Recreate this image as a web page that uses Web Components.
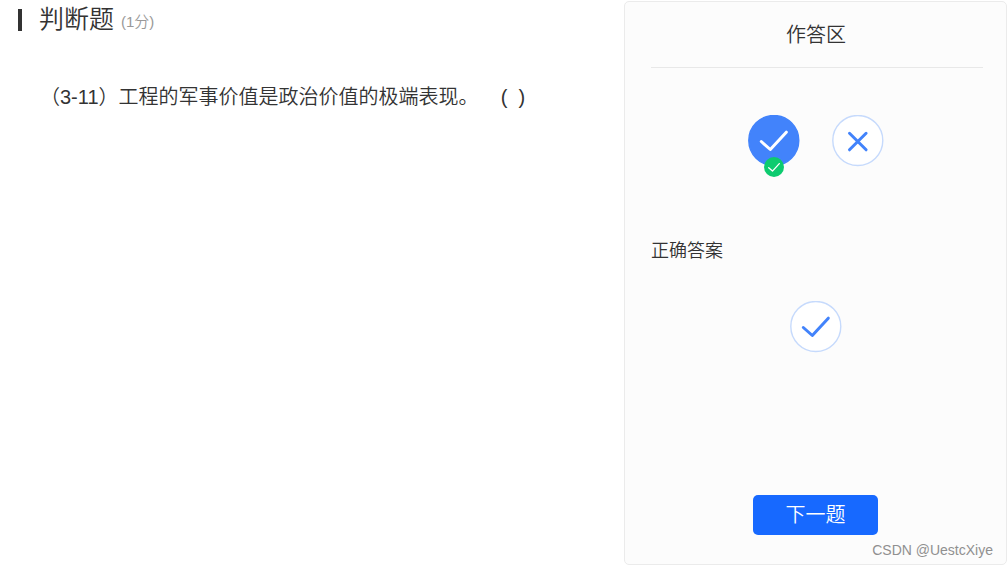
<!DOCTYPE html>
<html lang="zh-CN">
<head>
<meta charset="utf-8">
<meta name="viewport" content="width=device-width, initial-scale=1">
<title>判断题</title>
<style>
html, body { margin: 0; background: #fff; }
body { color: #333; font-family: "Liberation Sans", "Noto Sans CJK SC", sans-serif; font-weight: 350; }
</style>
</head>
<body>
<quiz-page>
  <quiz-question points="(1分)">
    <span slot="kind">判断题</span>
    （3-11）工程的军事价值是政治价值的极端表现。&nbsp;&nbsp;&nbsp;&nbsp;(&nbsp;&nbsp;)
  </quiz-question>
  <answer-panel slot="aside">
    <span slot="title">作答区</span>
    <answer-choices slot="choices"></answer-choices>
    <span slot="label">正确答案</span>
    <mark-icon slot="correct" kind="check" role="img" aria-label="对"></mark-icon>
    <next-button slot="action">下一题</next-button>
    <span slot="watermark">CSDN @UestcXiye</span>
  </answer-panel>
</quiz-page>
<script>
class BaseElement extends HTMLElement {
  constructor() {
    super();
    this.attachShadow({ mode: "open" }).innerHTML = this.template();
  }
}

customElements.define("quiz-page", class extends BaseElement {
  template() {
    return `<style>
      :host { display: grid; grid-template-columns: minmax(0, 1fr) 383px; min-height: 100vh; box-sizing: border-box; padding: 1px 0 2px; }
    </style><slot></slot><slot name="aside"></slot>`;
  }
});

customElements.define("quiz-question", class extends BaseElement {
  template() {
    return `<style>
      :host { display: block; padding: 0 18px; }
      header { display: flex; align-items: center; height: 36px; }
      header::before { content: ""; width: 4px; height: 22px; margin: 2px 17px 0 0; background: #333; }
      h1 { margin: 0; font-size: 25px; line-height: 36px; font-weight: inherit; }
      small { margin: 6px 0 0 7px; font-size: 15px; line-height: 20px; color: #999; }
      p { margin: 44px 0 0; padding-left: 22px; font-size: 20px; line-height: 32px; }
    </style>
    <header><h1><slot name="kind"></slot></h1><small></small></header>
    <p><slot></slot></p>`;
  }
  connectedCallback() {
    this.shadowRoot.querySelector("small").textContent = this.getAttribute("points");
  }
});

customElements.define("answer-panel", class extends BaseElement {
  template() {
    return `<style>
      :host { display: flex; flex-direction: column; position: relative; box-sizing: border-box; padding-bottom: 29px; border: 1px solid #ebebeb; border-radius: 5px; background: #fcfcfc; }
      h2 { margin: 0 23px 0 26px; padding: 2px 2px 0 0; border-bottom: 1px solid #e8e8e8; font-size: 20px; line-height: 63px; font-weight: inherit; text-align: center; }
      .choices { margin-top: 47px; }
      h3 { margin: 72px 26px 38px; font-size: 18px; line-height: 24px; font-weight: inherit; }
      .correct { display: flex; justify-content: center; }
      footer { display: flex; justify-content: center; margin-top: auto; padding-top: 40px; }
      .watermark { position: absolute; right: 13px; bottom: 4px; font-size: 14px; line-height: 20px; color: #909090; }
    </style>
    <h2><slot name="title"></slot></h2>
    <div class="choices"><slot name="choices"></slot></div>
    <h3><slot name="label"></slot></h3>
    <div class="correct"><slot name="correct"></slot></div>
    <footer><slot name="action"></slot></footer>
    <div class="watermark"><slot name="watermark"></slot></div>`;
  }
});

customElements.define("mark-icon", class extends BaseElement {
  template() {
    return `<style>
      :host { display: block; width: 52px; height: 52px; --disc: #fff; --ring: #c6dafc; --stroke: #4283fb; }
      :host([filled]) { --disc: #4283fb; --ring: #4283fb; --stroke: #fff; }
      svg { display: block; width: 100%; height: 100%; }
      circle { fill: var(--disc); stroke: var(--ring); stroke-width: 1.4; }
      path { fill: none; stroke: var(--stroke); stroke-width: 3; stroke-linecap: round; stroke-linejoin: round; }
      .cross { display: none; }
      :host([kind="cross"]) .cross { display: inline; }
      :host([kind="cross"]) .check { display: none; }
    </style>
    <svg viewBox="0 0 52 52" aria-hidden="true">
      <circle cx="25.8" cy="25.5" r="25"/>
      <path class="check" d="M13.3 26.5 22.3 34.5 38.3 17.2"/>
      <path class="cross" d="M17.5 18.3 34.1 34.8M34.1 18.3 17.5 34.8"/>
    </svg>`;
  }
});

customElements.define("answer-choices", class extends BaseElement {
  template() {
    return `<style>
      :host { display: block; }
      fieldset { display: flex; justify-content: center; gap: 32px; min-width: 0; margin: 0; padding: 0; border: 0; }
      label { position: relative; display: block; cursor: pointer; }
      input { position: absolute; inset: 0; width: 100%; height: 100%; margin: 0; opacity: 0; cursor: pointer; }
      .badge { position: absolute; left: 16px; bottom: -10px; width: 20px; height: 20px; pointer-events: none; }
    </style>
    <fieldset aria-label="作答区">
      <label>
        <input type="radio" name="answer" value="true" aria-label="对" checked>
        <mark-icon kind="check" filled></mark-icon>
        <svg class="badge" viewBox="0 0 20 20" aria-hidden="true">
          <circle cx="10" cy="10" r="10" fill="#0dcb6f"/>
          <path d="M4.7 10.7 8.5 14.1 15.3 6.6" fill="none" stroke="#fff" stroke-width="1.3" stroke-linecap="round" stroke-linejoin="round"/>
        </svg>
      </label>
      <label>
        <input type="radio" name="answer" value="false" aria-label="错">
        <mark-icon kind="cross"></mark-icon>
      </label>
    </fieldset>`;
  }
  connectedCallback() {
    this.shadowRoot.addEventListener("change", () => {
      for (const input of this.shadowRoot.querySelectorAll("input")) {
        input.parentElement.querySelector("mark-icon").toggleAttribute("filled", input.checked);
      }
    });
  }
});

customElements.define("next-button", class extends BaseElement {
  template() {
    return `<style>
      :host { display: block; }
      button { display: block; min-width: 125px; height: 40px; padding: 0 20px; border: 0; border-radius: 5px; background: #1769ff; color: #fff; font: inherit; font-size: 20px; line-height: 40px; cursor: pointer; }
    </style><button type="button"><slot></slot></button>`;
  }
});
</script>
</body>
</html>
